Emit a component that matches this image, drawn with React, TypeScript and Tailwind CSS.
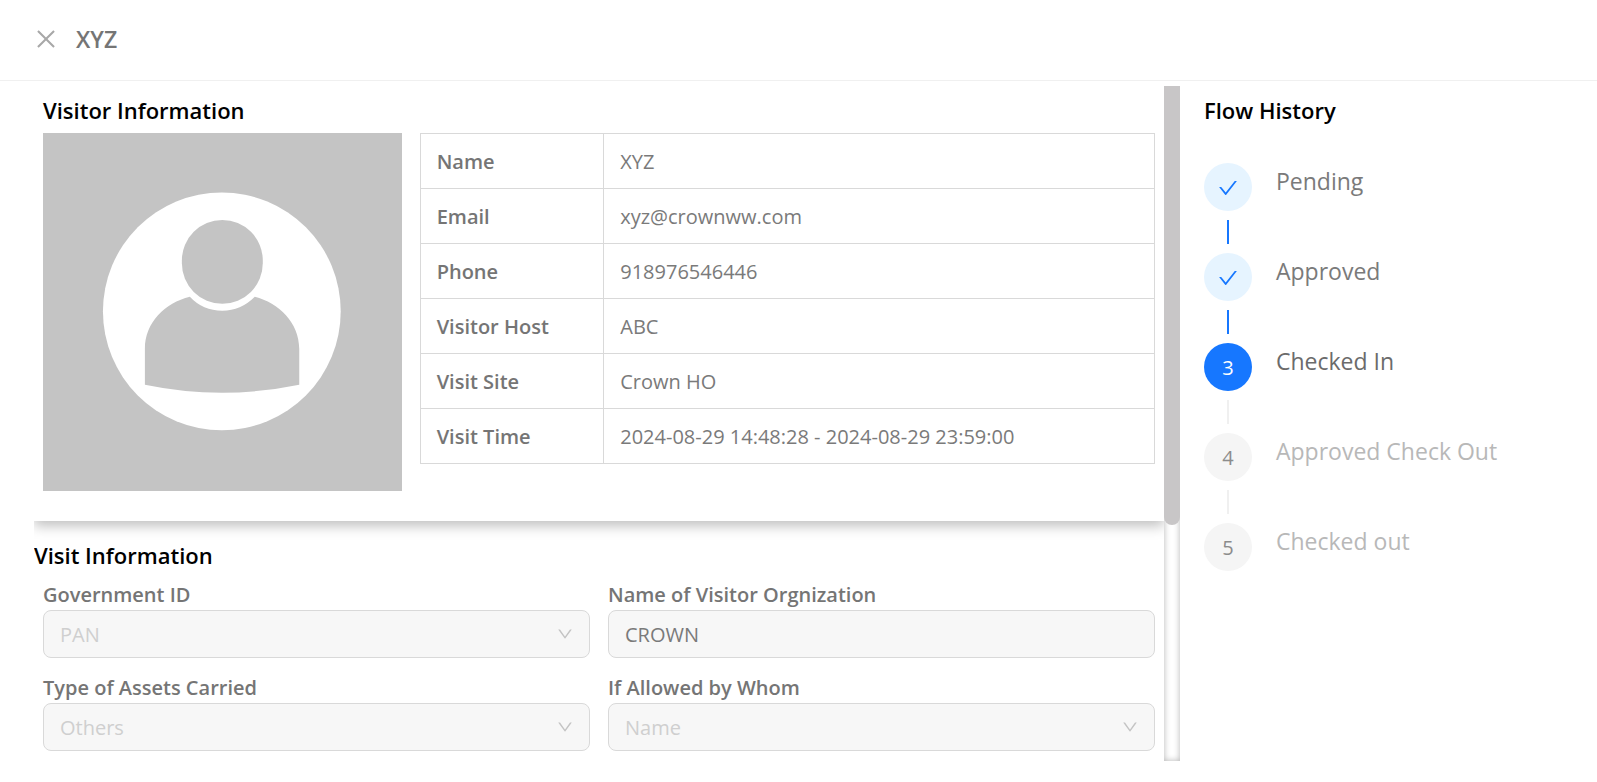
import { clsx } from "clsx"
import { AiOutlineCheck, AiOutlineClose, AiOutlineDown } from "react-icons/ai"

type StepStatus = "finish" | "process" | "wait"

interface Step {
  title: string
  status: StepStatus
}

interface Field {
  id: string
  label: string
  value: string
  type: "select" | "text"
}

const visitorDetails = [
  { label: "Name", value: "XYZ" },
  { label: "Email", value: "xyz@crownww.com" },
  { label: "Phone", value: "918976546446" },
  { label: "Visitor Host", value: "ABC" },
  { label: "Visit Site", value: "Crown HO" },
  { label: "Visit Time", value: "2024-08-29 14:48:28 - 2024-08-29 23:59:00" },
]

const visitFields: Field[] = [
  { id: "government-id", label: "Government ID", value: "PAN", type: "select" },
  { id: "organization", label: "Name of Visitor Orgnization", value: "CROWN", type: "text" },
  { id: "assets", label: "Type of Assets Carried", value: "Others", type: "select" },
  { id: "allowed-by", label: "If Allowed by Whom", value: "Name", type: "select" },
]

const steps: Step[] = [
  { title: "Pending", status: "finish" },
  { title: "Approved", status: "finish" },
  { title: "Checked In", status: "process" },
  { title: "Approved Check Out", status: "wait" },
  { title: "Checked out", status: "wait" },
]

function Avatar() {
  return (
    <svg viewBox="0 0 359 358" className="block w-full bg-[#c4c4c4]" role="img" aria-label="Visitor photo">
      <circle cx="179" cy="178.5" r="119" fill="#fff" />
      <path
        d="M102 252V216C102 190 122 170 147 164Q160 178 179.5 178Q198 178 212 164C236 170 256.5 190 256.5 216V252Q179 268 102 252Z"
        fill="#c4c4c4"
      />
      <rect x="139" y="87" width="81" height="84" rx="40.5" fill="#c4c4c4" />
    </svg>
  )
}

function VisitField({ field }: { field: Field }) {
  return (
    <div>
      <label htmlFor={field.id} className="block h-[30px] text-[20px] leading-[30px] font-semibold text-[#757575]">
        {field.label}
      </label>
      {field.type === "select" ? (
        <div className="relative">
          <select
            id={field.id}
            disabled
            className="block h-12 w-full appearance-none rounded-lg border border-[#d9d9d9] bg-[#f7f7f7] px-4 pt-0.5 text-[20px] text-[#cfcfcf] opacity-100"
          >
            <option>{field.value}</option>
          </select>
          <AiOutlineDown className="pointer-events-none absolute top-[15px] right-4 size-[18px] text-[#c4c4c4]" />
        </div>
      ) : (
        <input
          id={field.id}
          type="text"
          defaultValue={field.value}
          readOnly
          className="block h-12 w-full rounded-lg border border-[#d9d9d9] bg-[#f7f7f7] px-4 pt-0.5 text-[20px] text-[#7a7a7a] outline-none"
        />
      )}
    </div>
  )
}

function FlowStep({ step, number, isLast }: { step: Step; number: number; isLast: boolean }) {
  return (
    <li className="flex gap-6">
      <div className="flex flex-col items-center">
        <span
          className={clsx(
            "flex size-12 items-center justify-center rounded-full pt-0.5 text-[20px]",
            step.status === "finish" && "bg-[#e6f4ff] text-[#1677ff]",
            step.status === "process" && "bg-[#1677ff] text-white",
            step.status === "wait" && "bg-[#f5f5f5] text-[#8c8c8c]",
          )}
        >
          {step.status === "finish" ? <AiOutlineCheck className="size-[22px]" /> : number}
        </span>
        {!isLast && (
          <span
            className={clsx("my-[9px] h-6 w-0.5", step.status === "finish" ? "bg-[#1677ff]" : "bg-[#f0f0f0]")}
          />
        )}
      </div>
      <span
        className={clsx(
          "text-[23px] leading-9",
          step.status === "finish" && "text-[#7a7a7a]",
          step.status === "process" && "text-[#6b6b6b]",
          step.status === "wait" && "text-[#b8b8b8]",
        )}
      >
        {step.title}
      </span>
    </li>
  )
}

export default function App() {
  return (
    <div className="flex min-h-screen flex-col bg-white font-['Open_Sans','Noto_Sans',sans-serif]">
      <header className="flex h-[81px] items-center gap-[17px] border-b border-[#f0f0f0] px-[33px] pb-[3px]">
        <button type="button" aria-label="Close" className="text-[#a8a8a8]">
          <AiOutlineClose className="size-[26px]" />
        </button>
        <h1 className="text-[23px] leading-9 font-semibold text-[#757575]">XYZ</h1>
      </header>

      <main className="flex flex-1 pt-[5px] pr-[35px] pb-[21px] pl-[34px]">
        <div className="flex w-3/4">
          <div className="min-w-0 flex-1 overflow-hidden">
            <section className="bg-white px-[9px] pt-1.5 pb-[30px] shadow-[0_5px_12px_rgba(0,0,0,0.25)]">
              <h2 className="text-[22px] leading-9 font-semibold text-black">Visitor Information</h2>
              <div className="mt-[5px] grid grid-cols-3 items-start gap-[18px]">
                <Avatar />
                <table className="col-span-2 w-full border-collapse text-[20px]">
                  <tbody>
                    {visitorDetails.map((row) => (
                      <tr key={row.label} className="h-[55px]">
                        <th
                          scope="row"
                          className="w-1/4 border border-[#d9d9d9] px-4 pt-0.5 text-left font-semibold text-[#757575]"
                        >
                          {row.label}
                        </th>
                        <td className="border border-[#d9d9d9] px-4 pt-0.5 text-[#7a7a7a]">{row.value}</td>
                      </tr>
                    ))}
                  </tbody>
                </table>
              </div>
            </section>

            <section className="pt-4">
              <h2 className="text-[22px] leading-9 font-semibold text-black">Visit Information</h2>
              <div className="mt-[7px] grid grid-cols-2 gap-x-[18px] gap-y-[15px] px-[9px]">
                {visitFields.map((field) => (
                  <VisitField key={field.id} field={field} />
                ))}
              </div>
            </section>
          </div>

          {/* Scroll track */}
          <div aria-hidden="true" className="w-4 shrink-0 bg-white shadow-[inset_0_0_6px_rgba(0,0,0,0.3)]">
            <div className="h-[65%] rounded-b-lg bg-[#c8c6c7]" />
          </div>
        </div>

        <aside className="w-1/4 pt-1.5 pl-6">
          <h2 className="text-[22px] leading-9 font-semibold text-black">Flow History</h2>
          <ol className="mt-[35px]">
            {steps.map((step, i) => (
              <FlowStep key={step.title} step={step} number={i + 1} isLast={i === steps.length - 1} />
            ))}
          </ol>
        </aside>
      </main>
    </div>
  )
}
